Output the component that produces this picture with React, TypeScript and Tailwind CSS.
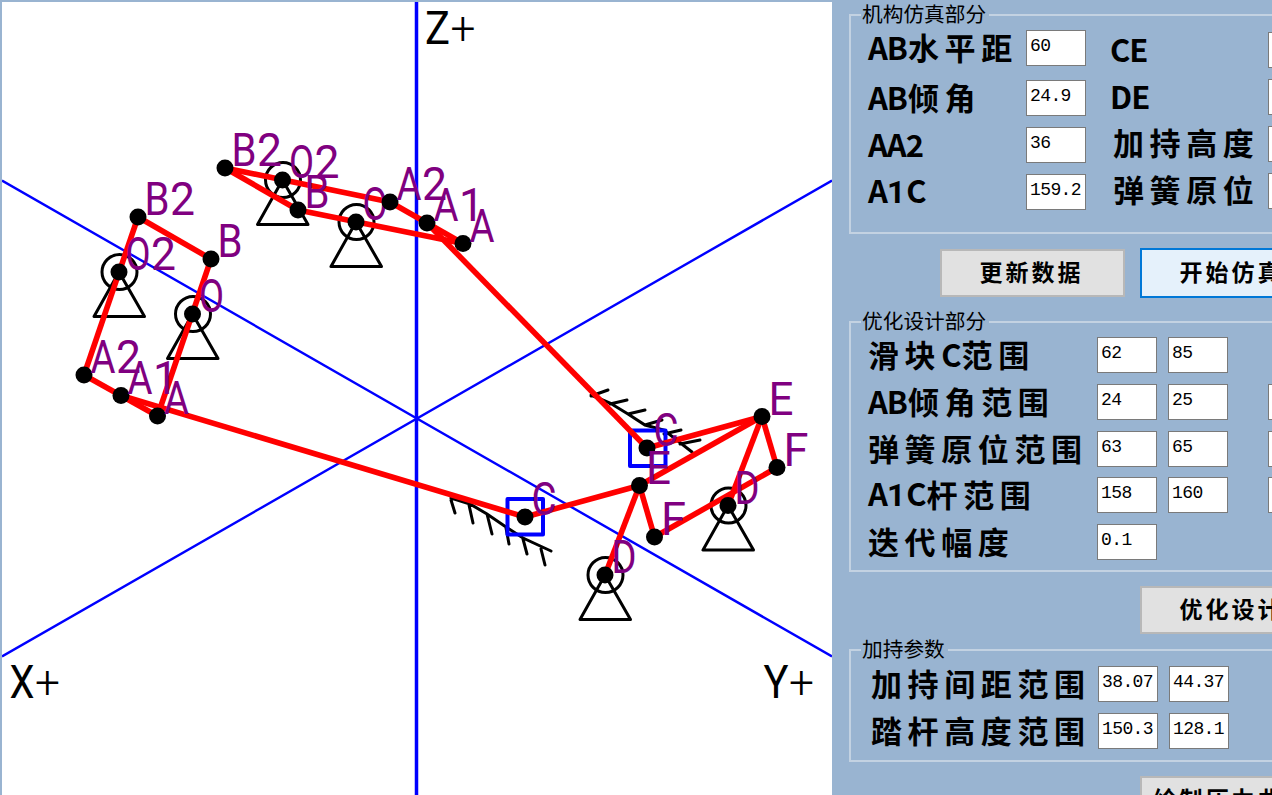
import React from "react";

type Pt = { n: string; x: number; y: number };

const upper: Pt[] = [
  { n: "B2", x: 225, y: 168 },
  { n: "O2", x: 282.5, y: 180 },
  { n: "B", x: 298, y: 210 },
  { n: "O", x: 356, y: 222 },
  { n: "A2", x: 390, y: 202 },
  { n: "A1", x: 427, y: 223 },
  { n: "A", x: 463, y: 243.5 },
  { n: "C", x: 647, y: 448 },
  { n: "E", x: 762, y: 416.5 },
  { n: "D", x: 728, y: 505.5 },
  { n: "F", x: 777, y: 467.5 },
];

const lower: Pt[] = [
  { n: "B2", x: 138, y: 217 },
  { n: "O2", x: 119, y: 272 },
  { n: "B", x: 211, y: 259 },
  { n: "O", x: 192.5, y: 314 },
  { n: "A2", x: 84, y: 375 },
  { n: "A1", x: 121, y: 395.5 },
  { n: "A", x: 157.5, y: 416 },
  { n: "C", x: 525, y: 517 },
  { n: "E", x: 639.5, y: 485.5 },
  { n: "D", x: 605, y: 575 },
  { n: "F", x: 654.5, y: 537 },
];

const linkPairs = [
  ["B2", "B"],
  ["B2", "A2"],
  ["B", "A"],
  ["A2", "A"],
  ["A1", "C"],
  ["C", "E"],
  ["E", "D"],
  ["E", "F"],
];

const find = (set: Pt[], n: string) => set.find((p) => p.n === n)!;

function Support({ x, y }: { x: number; y: number }) {
  return (
    <g stroke="#000" strokeWidth="3" fill="none" strokeLinejoin="round">
      <circle cx={x + 0.5} cy={y} r="17.5" />
      <path d={`M${x} ${y}L${x - 25} ${y + 44.5}H${x + 25.5}Z`} />
    </g>
  );
}

function Label({ text, x, y, fill }: { text: string; x: number; y: number; fill: string }) {
  return (
    <>
      {text.split("").map((c, i) => (
        <text
          key={i}
          x={x + i * 25.6}
          y={y}
          fontSize="45.5"
          fill={fill}
          textLength="25"
          lengthAdjust="spacingAndGlyphs"
          className={c === "+" ? "font-['Roboto',sans-serif] font-light" : "font-['Roboto',sans-serif] font-normal"}
        >
          {c}
        </text>
      ))}
    </>
  );
}

function Diagram() {
  return (
    <svg width="830" height="793" viewBox="2 2 830 793" className="block">
      <g stroke="#0000ff" strokeWidth="2.4">
        <path d="M2 180.5L832 656.5M2 656.5L832 180.5" />
        <path d="M416.5 2V795" strokeWidth="3.5" />
      </g>
      {[upper, lower].map((set, i) => (
        <g key={i}>
          {["O", "O2", "D"].map((n) => (
            <Support key={n} x={find(set, n).x} y={find(set, n).y} />
          ))}
        </g>
      ))}
      <g stroke="#000" strokeWidth="3" fill="none" strokeLinecap="round">
        <path d="M451 498L470 504L487 514L506 527L523 538L551 551M451 500L455 513M469 505L473 523M487 514L492 534M506 528L509 544M523 539L527 554M541 549L545 565" />
        <path d="M591 395L610 403L628 414L645 425L664 430L692 452M591 396L608 390M610 404L627 400M628 414L645 410M645 425L662 420M664 434L681 430M680 444L700 440" />
      </g>
      <g stroke="#0000ff" strokeWidth="4" fill="none" strokeLinejoin="round">
        <rect x="507.500" y="499" width="35.500" height="35.500" />
        <rect x="630" y="430.500" width="35.500" height="35.500" />
      </g>
      <g stroke="#ff0000" strokeWidth="5.6">
        {[upper, lower].map((set) =>
          linkPairs.map(([a, b]) => {
            const p = find(set, a);
            const q = find(set, b);
            return <line key={a + b + p.x} x1={p.x} y1={p.y} x2={q.x} y2={q.y} />;
          }),
        )}
        <line x1="639.500" y1="485.500" x2="762" y2="416.500" />
        <line x1="654.500" y1="537" x2="777" y2="467.500" />
      </g>
      {[upper, lower].map((set, i) => (
        <g key={i}>
          {set.map((p) => (
            <g key={p.n}>
              <circle cx={p.x} cy={p.y} r="8.5" />
              <Label text={p.n} x={p.x + 6.5} y={p.y - 2} fill="#800080" />
            </g>
          ))}
        </g>
      ))}
      <Label text="Z+" x={425} y={44} fill="#000" />
      <Label text="X+" x={9.5} y={698} fill="#000" />
      <Label text="Y+" x={763.5} y={698} fill="#000" />
    </svg>
  );
}

function Caption({ text, className = "" }: { text: string; className?: string }) {
  return (
    <div className={`flex h-9 items-center whitespace-nowrap text-[31px] font-bold leading-9 ${className}`}>
      {text.split(/([A-Z0-9]+)/).map((s, i) =>
        /[A-Z0-9]/.test(s) ? (
          <span key={i} className="-mt-[2px] pr-px tracking-[-1px]">
            {s.split(/(1)/).map((t, j) => (
              <span key={j} className={t === "1" ? "font-['Roboto',sans-serif] text-[32px] tracking-[1px]" : ""}>
                {t}
              </span>
            ))}
          </span>
        ) : (
          <span key={i} className="-mt-[2px] tracking-[5.6px]">
            {s}
          </span>
        ),
      )}
    </div>
  );
}

function Field({ value = "" }: { value?: string }) {
  return (
    <div className="h-9 w-[60px] shrink-0 overflow-hidden border-[1.5px] border-[#7a7a7a] bg-white pl-[3px] pt-[2px] font-['Liberation_Mono',monospace] text-[18px] leading-[27px] tracking-[-0.6px]">
      {value}
    </div>
  );
}

function Group({ title, className, children }: { title: string; className: string; children: React.ReactNode }) {
  return (
    <fieldset className={`min-w-0 shrink-0 border-2 border-[#c3d2e2] ${className}`}>
      <legend className="ml-[10px] h-[26px] pl-[1px] pr-[3px] text-[20.7px] leading-[22px]">{title}</legend>
      {children}
    </fieldset>
  );
}

function Button({ text, active = false, className = "" }: { text: string; active?: boolean; className?: string }) {
  return (
    <button
      className={`shrink-0 whitespace-nowrap border-2 pb-[3px] pr-[2px] text-[23px] font-bold leading-none tracking-[3px] ${
        active ? "border-[#0078d7] bg-[#e5f1fb]" : "border-[#b8b8b8] bg-[#e1e1e1]"
      } ${className}`}
    >
      {text}
    </button>
  );
}

const designRows = [
  { label: "滑块C范围", a: "62", b: "85", extra: false },
  { label: "AB倾角范围", a: "24", b: "25", extra: true },
  { label: "弹簧原位范围", a: "63", b: "65", extra: true },
  { label: "A1C杆范围", a: "158", b: "160", extra: true },
  { label: "迭代幅度", a: "0.1", b: "", extra: false },
];

export default function App() {
  return (
    <div className="flex h-[795px] w-[1272px] overflow-hidden bg-[#99b4d1] font-['Noto_Sans_CJK_SC',sans-serif] text-black">
      <div className="h-[795px] w-[832px] shrink-0 pl-[2px] pt-[2px]">
        <div className="h-full bg-white">
          <Diagram />
        </div>
      </div>
      <div className="flex w-[520px] shrink-0 flex-col pl-[17px]">
        <Group title="机构仿真部分" className="mt-[2px] h-[232px]">
          <div className="flex pl-[17px]">
            <div className="flex w-[158px] shrink-0 flex-col gap-[11px]">
              <Caption text="AB水平距" className="mt-[2px]" />
              <Caption text="AB倾角" className="mt-[3px]" />
              <Caption text="AA2" />
              <Caption text="A1C" />
            </div>
            <div className="flex w-[84px] shrink-0 flex-col gap-[11px] pt-[2px]">
              <Field value="60" />
              <div className="mt-[3px]">
                <Field value="24.9" />
              </div>
              <Field value="36" />
              <Field value="159.2" />
            </div>
            <div className="flex w-[158px] shrink-0 flex-col gap-[11px]">
              <Caption text="CE" className="mt-[4px]" />
              <Caption text="DE" />
              <Caption text="加持高度" className="-mt-[1px] pl-[3px]" />
              <Caption text="弹簧原位" className="pl-[3px]" />
            </div>
            <div className="flex shrink-0 flex-col gap-[11px] pt-[4px]">
              <Field />
              <Field />
              <Field />
              <Field />
            </div>
          </div>
        </Group>
        <div className="mt-[14px] flex shrink-0 items-center gap-[15px] pl-[91px]">
          <Button text="更新数据" className="h-[48px] w-[185px]" />
          <Button text="开始仿真" active className="h-[50px] w-[185px]" />
        </div>
        <Group title="优化设计部分" className="mt-[11px] h-[263px]">
          <div className="flex flex-col gap-[10.8px] pl-[17px] pt-[2px]">
            {designRows.map((r) => (
              <div key={r.label} className="flex h-9 items-center">
                <Caption text={r.label} className="w-[229px] shrink-0" />
                <div className="flex gap-[11px]">
                  <Field value={r.a} />
                  {r.b && <Field value={r.b} />}
                </div>
                {r.extra && (
                  <div className="ml-[40px]">
                    <Field />
                  </div>
                )}
              </div>
            ))}
          </div>
        </Group>
        <div className="mt-[14px] shrink-0 pl-[291px]">
          <Button text="优化设计" className="h-[48px] w-[185px]" />
        </div>
        <Group title="加持参数" className="mt-[3px] h-[125px]">
          <div className="flex flex-col gap-[10.8px] pl-[20px] pt-[3px]">
            {[
              ["加持间距范围", "38.07", "44.37"],
              ["踏杆高度范围", "150.3", "128.1"],
            ].map(([label, a, b]) => (
              <div key={label} className="flex h-9 items-center">
                <Caption text={label} className="w-[227px] shrink-0" />
                <div className="flex gap-[11px]">
                  <Field value={a} />
                  <Field value={b} />
                </div>
              </div>
            ))}
          </div>
        </Group>
        <div className="mt-[14px] shrink-0 pl-[291px]">
          <Button text="绘制压力曲线" className="h-[48px] w-[185px]" />
        </div>
      </div>
    </div>
  );
}
